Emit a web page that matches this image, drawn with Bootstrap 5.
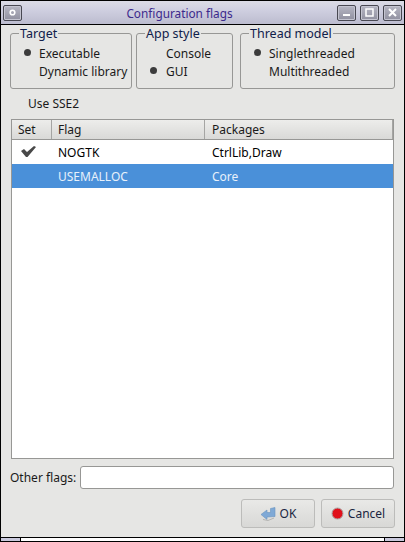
<!doctype html>
<html lang="en">

<head>
    <meta charset="UTF-8">
    <meta name="viewport" content="width=device-width, initial-scale=1">
    <title>Configuration flags</title>
    <link href="https://cdn.jsdelivr.net/npm/bootstrap@5.3.3/dist/css/bootstrap.min.css" rel="stylesheet">
    <style>
        html, body { height: 100%; }
        body {
            background: #e6e6e4;
            color: #1a1a1a;
            font-family: "Noto Sans", "DejaVu Sans", sans-serif;
            font-size: 12px;
            line-height: 18px;
            overflow: hidden;
        }
        .win-frame {
            width: 405px;
            height: 542px;
            border: 1px solid #000;
            display: flex;
            flex-direction: column;
        }
        .win-title {
            height: 24px;
            flex: none;
            background: linear-gradient(#dcdce6, #cfcfe0 40%, #bcbccf);
            border-bottom: 1px solid #000;
            padding: 0 2px;
        }
        .win-title-text { color: #3c2a8c; font-size: 11.8px; }
        .title-btn {
            width: 19px;
            height: 16px;
            border: 1px solid #484852;
            border-radius: 2px;
            background: linear-gradient(#b6b6c3, #9090a0);
            box-shadow: inset 0 0 0 1px #c4c4d0;
            display: flex;
            align-items: center;
            justify-content: center;
        }
        .win-body {
            flex: 1;
            min-height: 0;
            padding: 8px 10px 0 10px;
        }
        .opt-line { margin-left: -1px; }
        .opt-box {
            border: 1px solid #979795;
            border-radius: 3px;
            height: 56px;
            position: relative;
            padding: 11px 0 0 0;
            flex: none;
        }
        .opt-legend {
            position: absolute;
            top: -8px;
            left: 8px;
            background: #e6e6e4;
            padding: 0 1px;
            color: #10204a;
            font-size: 12.5px;
            line-height: 16px;
        }
        .opt-row { height: 18px; position: relative; white-space: nowrap; }
        .opt-dot {
            position: absolute;
            top: 4px;
            width: 7px;
            height: 7px;
            border-radius: 50%;
            background: #3c3c3c;
        }
        .sse-label { padding-left: 17px; margin-top: 6px; height: 18px; }
        .flag-grid {
            border: 1px solid #979795;
            background: #fff;
            height: 340px;
            margin-top: 6px;
        }
        .grid-head {
            height: 20px;
            background: linear-gradient(#ededeb, #d9d9d7);
            border-bottom: 1px solid #979795;
        }
        .grid-cell { padding-left: 6px; flex: none; white-space: nowrap; line-height: 19px; }
        .grid-head .grid-cell { border-right: 1px solid #a5a5a3; height: 19px; }
        .cell-set { width: 40px; }
        .cell-flag { width: 153px; }
        .grid-cell.cell-pkg { flex: 1; padding-left: 7px; }
        .grid-row { height: 24px; color: #000; }
        .grid-row .grid-cell { line-height: 26px; }
        .grid-row.picked { background: #4a90d9; color: #e8f1fb; }
        .check-mark { display: block; margin: 6px 0 0 3px; }
        .other-input {
            height: 23px;
            flex: 1;
            border: 1px solid #979795;
            border-radius: 3px;
            background: #fff;
        }
        .other-row { margin: 7px 0 0 -1px; }
        .dlg-btn {
            width: 74px;
            height: 29px;
            border: 1px solid #bcbcba;
            border-radius: 3px;
            background: linear-gradient(#e9e9e7, #d8d8d6);
            color: #1a2540;
            font-size: 12px;
            padding: 0;
            gap: 4px;
        }
        .btn-row { margin: 10px -1px 0 0; gap: 6px; }
        .win-grip {
            height: 4px;
            flex: none;
            border-top: 1px solid #000;
            background: #fff;
        }
        .grip-end { width: 20px; background: #c9c9dc; }
        .grip-end:first-child { border-right: 1px solid #000; }
        .grip-end:last-child { border-left: 1px solid #000; }
    </style>
</head>

<body>
    <div class="win-frame">
        <div class="win-title d-flex align-items-center">
            <div class="title-btn">
                <svg width="7" height="7" viewBox="0 0 7 7"><circle cx="3.5" cy="3.5" r="2.3" fill="none" stroke="#fff" stroke-width="1.6"/></svg>
            </div>
            <div class="win-title-text flex-grow-1 text-center">Configuration flags</div>
            <div class="d-flex gap-1">
                <div class="title-btn">
                    <svg width="9" height="9" viewBox="0 0 9 9"><rect x="1" y="6" width="7" height="2" fill="#fff"/></svg>
                </div>
                <div class="title-btn">
                    <svg width="9" height="9" viewBox="0 0 9 9"><rect x="1" y="1" width="7" height="7" fill="none" stroke="#fff" stroke-width="1.5"/></svg>
                </div>
                <div class="title-btn">
                    <svg width="9" height="9" viewBox="0 0 9 9"><path d="M1 1L8 8M8 1L1 8" stroke="#fff" stroke-width="2"/></svg>
                </div>
            </div>
        </div>

        <div class="win-body">
            <div class="opt-line d-flex">
                <div class="opt-box" style="width:122px">
                    <span class="opt-legend">Target</span>
                    <div class="opt-row" style="padding-left:28px"><span class="opt-dot" style="left:13px"></span>Executable</div>
                    <div class="opt-row" style="padding-left:28px">Dynamic library</div>
                </div>
                <div class="opt-box ms-1" style="width:97px">
                    <span class="opt-legend">App style</span>
                    <div class="opt-row" style="padding-left:29px">Console</div>
                    <div class="opt-row" style="padding-left:29px"><span class="opt-dot" style="left:13px"></span>GUI</div>
                </div>
                <div class="opt-box" style="width:155px;margin-left:7px">
                    <span class="opt-legend">Thread model</span>
                    <div class="opt-row" style="padding-left:28px"><span class="opt-dot" style="left:13px"></span>Singlethreaded</div>
                    <div class="opt-row" style="padding-left:28px">Multithreaded</div>
                </div>
            </div>

            <div class="sse-label">Use SSE2</div>

            <div class="flag-grid">
                <div class="grid-head d-flex">
                    <div class="grid-cell cell-set">Set</div>
                    <div class="grid-cell cell-flag">Flag</div>
                    <div class="grid-cell cell-pkg">Packages</div>
                </div>
                <div class="grid-row d-flex">
                    <div class="grid-cell cell-set">
                        <svg class="check-mark" width="15" height="11" viewBox="0 0 15 11"><path d="M0 5L3 3L6 6L13 0L15 1L6.5 11H5Z" fill="#484848"/></svg>
                    </div>
                    <div class="grid-cell cell-flag">NOGTK</div>
                    <div class="grid-cell cell-pkg">CtrlLib,Draw</div>
                </div>
                <div class="grid-row picked d-flex">
                    <div class="grid-cell cell-set"></div>
                    <div class="grid-cell cell-flag">USEMALLOC</div>
                    <div class="grid-cell cell-pkg">Core</div>
                </div>
            </div>

            <div class="other-row d-flex align-items-center gap-1">
                <span>Other flags:</span>
                <div class="other-input"></div>
            </div>

            <div class="btn-row d-flex justify-content-end">
                <button class="btn dlg-btn d-flex align-items-center justify-content-center">
                    <svg width="16" height="14" viewBox="0 0 16 14"><path d="M1 7.5L7 3V5.5H10.5V1.5L15 .5V9.5L7 10V12.5Z" fill="#7fa9d6" stroke="#6a93c0" stroke-width=".6"/><path d="M3 12.5L8 13.5L14 11" fill="none" stroke="#b4b4b2" stroke-width="1"/></svg>OK</button>
                <button class="btn dlg-btn d-flex align-items-center justify-content-center">
                    <svg width="13" height="13" viewBox="0 0 13 13"><circle cx="6.5" cy="6.5" r="5.5" fill="#e0101a" stroke="#a8a8a6" stroke-width="1"/></svg>Cancel</button>
            </div>
        </div>

        <div class="win-grip d-flex justify-content-between">
            <div class="grip-end"></div>
            <div class="grip-end"></div>
        </div>
    </div>
</body>

</html>
